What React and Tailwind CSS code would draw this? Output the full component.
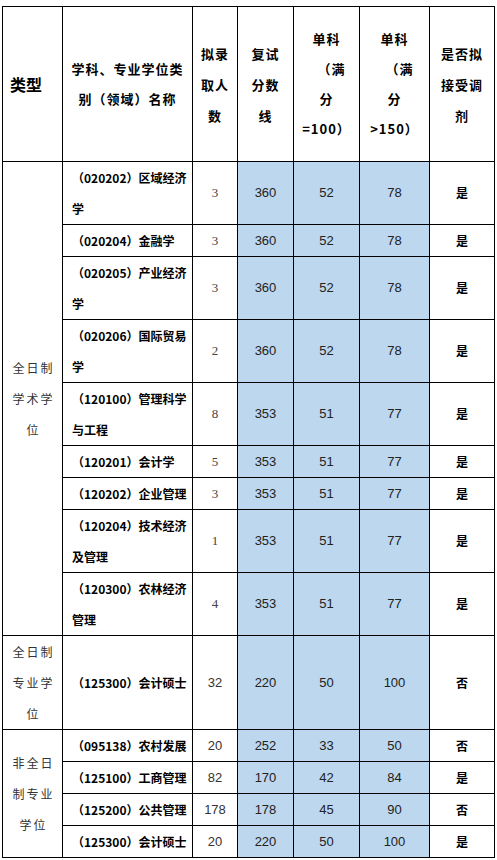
import React from "react";

const CJK = "font-['Noto_Sans_CJK_SC',sans-serif]";

const rows = [
  { name: ["（020202）区域经济", "学"], n: "3", s: "360", a: "52", b: "78", r: "是", serif: true },
  { name: ["（020204）金融学"], n: "3", s: "360", a: "52", b: "78", r: "是", serif: true },
  { name: ["（020205）产业经济", "学"], n: "3", s: "360", a: "52", b: "78", r: "是", serif: true },
  { name: ["（020206）国际贸易", "学"], n: "2", s: "360", a: "52", b: "78", r: "是", serif: true },
  { name: ["（120100）管理科学", "与工程"], n: "8", s: "353", a: "51", b: "77", r: "是", serif: true },
  { name: ["（120201）会计学"], n: "5", s: "353", a: "51", b: "77", r: "是", serif: true },
  { name: ["（120202）企业管理"], n: "3", s: "353", a: "51", b: "77", r: "是", serif: true },
  { name: ["（120204）技术经济", "及管理"], n: "1", s: "353", a: "51", b: "77", r: "是", serif: true },
  { name: ["（120300）农林经济", "管理"], n: "4", s: "353", a: "51", b: "77", r: "是", serif: true },
  { name: ["（125300）会计硕士"], n: "32", s: "220", a: "50", b: "100", r: "否" },
  { name: ["（095138）农村发展"], n: "20", s: "252", a: "33", b: "50", r: "否" },
  { name: ["（125100）工商管理"], n: "82", s: "170", a: "42", b: "84", r: "是" },
  { name: ["（125200）公共管理"], n: "178", s: "178", a: "45", b: "90", r: "否" },
  { name: ["（125300）会计硕士"], n: "20", s: "220", a: "50", b: "100", r: "是" },
];

const cats = {
  0: { span: "row-span-9", lines: ["全日制", "学术学", "位"] },
  9: { span: "row-span-1", lines: ["全日制", "专业学", "位"] },
  10: { span: "row-span-4", lines: ["非全日", "制专业", "学位"] },
};

function Lines({ lines }) {
  return lines.map((l, i) => (
    <React.Fragment key={i}>
      {i > 0 && <br />}
      {l}
    </React.Fragment>
  ));
}

export default function App() {
  const head = `bg-white flex items-center justify-center text-center ${CJK} font-bold text-[13px] text-black tracking-[1px]`;
  const num = "bg-[#bdd7ee] flex items-center justify-center font-['Liberation_Sans',sans-serif] text-[13px] text-[#222]";
  return (
    <div className="bg-white w-[497px] h-[860px] pt-[6px] pl-[2px]">
      <div className="grid w-fit bg-black p-px gap-px grid-cols-[59px_129px_44px_55px_65px_69px_64px] grid-rows-[154px_62px_31px_62px_62px_62px_31px_31px_62px_62px_93px_31px_31px_31px_31px]">
        <div className={`bg-white flex items-center pl-[7px] ${CJK} font-bold text-[16px] text-black`}>类型</div>
        <div className={`${head} leading-[30px]`}>
          <span>
            学科、专业学位类
            <br />
            别（领域）名称
          </span>
        </div>
        <div className={`${head} leading-[31px]`}>
          <span>
            拟录
            <br />
            取人
            <br />
            数
          </span>
        </div>
        <div className={`${head} leading-[31px]`}>
          <span>
            复试
            <br />
            分数
            <br />
            线
          </span>
        </div>
        <div className={`${head} leading-[30px] tracking-[0.5px]`}>
          <span>
            单科
            <br />
            <span className="pl-[10px]">（满</span>
            <br />
            分
            <br />
            =100）
          </span>
        </div>
        <div className={`${head} leading-[30px] tracking-[0.5px]`}>
          <span>
            单科
            <br />
            <span className="pl-[10px]">（满</span>
            <br />
            分
            <br />
            &gt;150）
          </span>
        </div>
        <div className={`${head} leading-[31px]`}>
          <span>
            是否拟
            <br />
            接受调
            <br />
            剂
          </span>
        </div>

        {rows.map((row, i) => (
          <React.Fragment key={i}>
            {cats[i] && (
              <div
                className={`${cats[i].span} bg-white flex items-center justify-center text-center ${CJK} text-[12px] leading-[31px] tracking-[2px] text-[#333]`}
              >
                <span className="pl-[2px]">
                  <Lines lines={cats[i].lines} />
                </span>
              </div>
            )}
            <div className={`bg-white flex items-center pl-[9px] ${CJK} font-bold text-[12px] leading-[31px] tracking-normal text-black whitespace-nowrap`}>
              <span>
                <Lines lines={row.name} />
              </span>
            </div>
            <div
              className={`bg-white flex items-center justify-center text-[13px] ${
                row.serif
                  ? "font-['Liberation_Serif',serif] text-[#444]"
                  : "font-['Liberation_Sans',sans-serif] text-[#333]"
              }`}
            >
              {row.n}
            </div>
            <div className={num}>{row.s}</div>
            <div className={num}>{row.a}</div>
            <div className={num}>{row.b}</div>
            <div className={`bg-white flex items-center justify-center ${CJK} font-bold text-[12px] text-black`}>
              {row.r}
            </div>
          </React.Fragment>
        ))}
      </div>
    </div>
  );
}
